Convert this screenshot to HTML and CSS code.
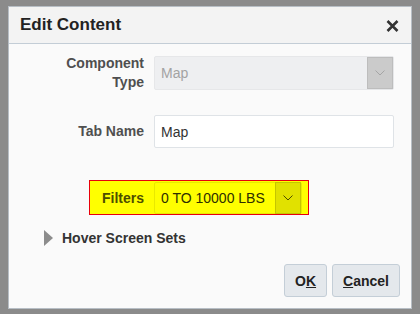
FILE: index.html
```html
<!DOCTYPE html>
<html lang="en">
<head>
    <meta charset="UTF-8">
    <title>Edit Content</title>
    <link rel="stylesheet" href="styles.css">
</head>
<body>

    <div class="dialog">
        <div class="dialog-header">
            <h2>Edit Content</h2>
            <button class="close" title="Close">
                <svg width="13" height="12" viewBox="0 0 13 12">
                    <path d="M1.5 1 L11.5 11 M11.5 1 L1.5 11" stroke="#333" stroke-width="2.6" fill="none"/>
                </svg>
            </button>
        </div>

        <div class="dialog-body">
            <!-- Component type (read only) -->
            <div class="row">
                <label class="label two-line">Component Type</label>
                <div class="select disabled">
                    <span class="value">Map</span>
                    <span class="arrow">
                        <svg width="10" height="6" viewBox="0 0 10 6"><path d="M0.5 0.5 L5 5 L9.5 0.5" stroke="#a5a5a5" stroke-width="1" fill="none"/></svg>
                    </span>
                </div>
            </div>

            <div class="row row-tab">
                <label class="label">Tab Name</label>
                <input class="text" type="text" value="Map">
            </div>

            <!-- highlighted filter -->
            <div class="highlight">
                <label class="label filter-label">Filters</label>
                <div class="select filter">
                    <span class="value">0 TO 10000 LBS</span>
                    <span class="arrow">
                        <svg width="10" height="6" viewBox="0 0 10 6"><path d="M0.5 0.5 L5 5 L9.5 0.5" stroke="#4d4d00" stroke-width="1" fill="none"/></svg>
                    </span>
                </div>
            </div>

            <div class="disclosure">
                <span class="triangle"></span>
                <span>Hover Screen Sets</span>
            </div>

            <div class="buttons">
                <button class="btn">O<u>K</u></button>
                <button class="btn"><u>C</u>ancel</button>
            </div>
        </div>
    </div>

</body>
</html>
```

FILE: styles.css
```css
body {
    margin: 0;
    padding: 6px 0 0 8px;
    background-color: #8b8b8b;
    font-family: "Liberation Sans", Arial, sans-serif;
    height: 314px;
    box-sizing: border-box;
    overflow: hidden;
}
.dialog {
    width: 404px;
    height: 303px;
    box-sizing: border-box;
    background-color: #fafafa;
    border: 1px solid #b7bec5;
}
.dialog-header {
    height: 36px;
    display: flex;
    align-items: center;
    justify-content: space-between;
    padding: 0 12px 0 11px;
    background-color: #f3f3f3;
    border-bottom: 1px solid #c3cdd6;
}
h2 {
    margin: 0;
    font-size: 17px;
    font-weight: bold;
    color: #222;
}
.close {
    border: none;
    background: none;
    padding: 0;
    width: 13px;
    height: 12px;
    display: flex;
    margin-top: 1px;
}
.dialog-body {
    padding-top: 10px;
}
.row {
    display: flex;
    align-items: center;
    gap: 10px;
}
.row-tab {
    margin-top: 23px;
}
.label {
    width: 135px;
    text-align: right;
    font-size: 14px;
    font-weight: bold;
    color: #4f4f4f;
    line-height: 19px;
}
.two-line {
    padding-left: 50px;
    box-sizing: border-box;
}
.select {
    width: 240px;
    height: 34px;
    box-sizing: border-box;
    display: flex;
    align-items: center;
    justify-content: space-between;
    border: 1px solid #e6e7e9;
    border-radius: 2px;
    font-size: 14px;
}
.select .value {
    padding-left: 6px;
}
.select .arrow {
    width: 26px;
    height: 32px;
    box-sizing: border-box;
    display: flex;
    align-items: center;
    justify-content: center;
}
.disabled {
    background-color: #eeeff1;
    color: #a3a3a3;
}
.disabled .arrow {
    background-color: #cbcbcb;
    border: 1px solid #bdbdbd;
}
.text {
    width: 240px;
    height: 33px;
    box-sizing: border-box;
    margin: 0;
    padding: 0 6px;
    border: 1px solid #dfe3e7;
    border-radius: 2px;
    background-color: #fff;
    font-family: "Liberation Sans", Arial, sans-serif;
    font-size: 14px;
    color: #333;
}
.highlight {
    display: inline-flex;
    align-items: center;
    gap: 10px;
    margin: 32px 0 0 80px;
    padding: 1px 6px 0 10px;
    height: 35px;
    box-sizing: border-box;
    background-color: #ffff00;
    border: 1px solid #e8000b;
}
.filter-label {
    width: 44px;
    color: #4d4d00;
}
.filter {
    width: 148px;
    height: 32px;
    background-color: #ffff00;
    border-color: #e9e900;
    color: #2e2e00;
}
.filter .arrow {
    height: 32px;
    background-color: #e1e100;
    border: 1px solid #c5c500;
}
.disclosure {
    display: flex;
    align-items: center;
    gap: 9px;
    margin: 14px 0 0 35px;
    font-size: 14px;
    font-weight: bold;
    color: #333;
    height: 18px;
}
.triangle {
    width: 0;
    height: 0;
    border-top: 8px solid transparent;
    border-bottom: 8px solid transparent;
    border-left: 9px solid #8c8c8c;
}
.buttons {
    display: flex;
    justify-content: flex-end;
    gap: 5px;
    margin-top: 17px;
    padding-right: 11px;
}
.btn {
    height: 33px;
    padding: 0 10px;
    background-color: #e4e8ec;
    border: 1px solid #c4ced7;
    border-radius: 3px;
    font-family: "Liberation Sans", Arial, sans-serif;
    font-size: 14px;
    font-weight: bold;
    color: #222;
}
```
